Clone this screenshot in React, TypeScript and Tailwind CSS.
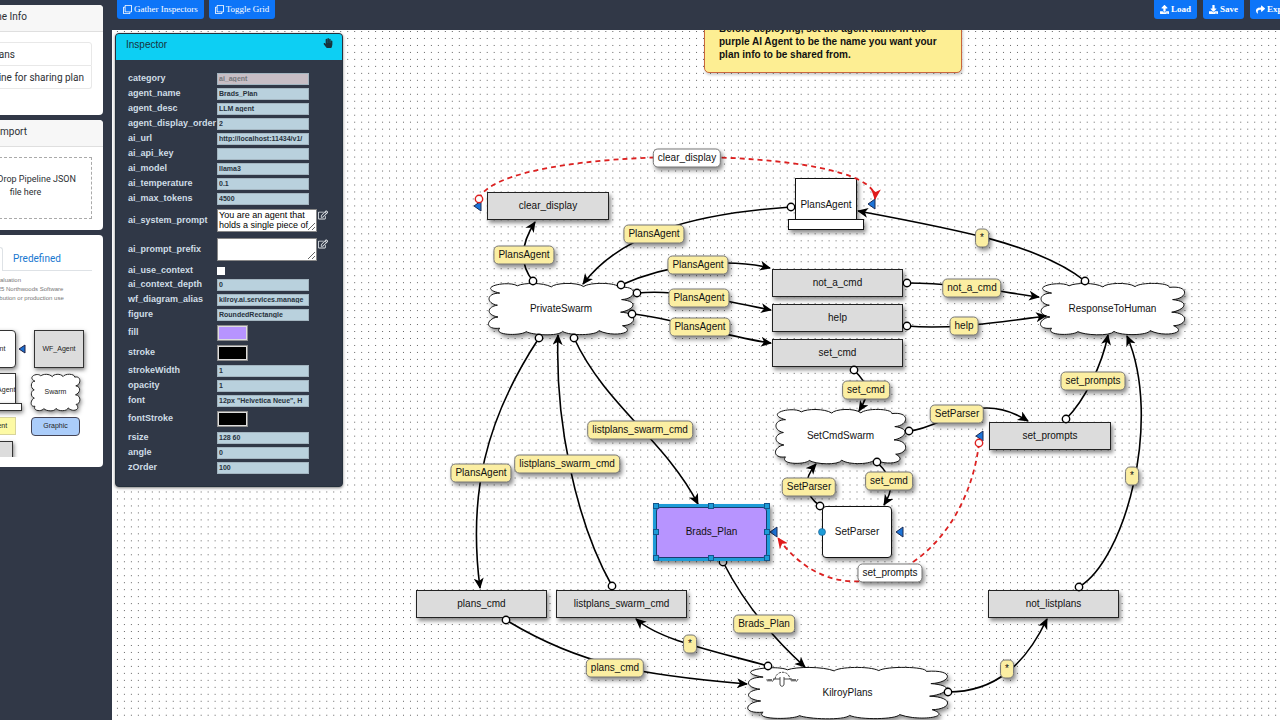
import {
  FaDownload,
  FaHandPaper,
  FaRegClone,
  FaRegEdit,
  FaShare,
  FaUpload,
} from "react-icons/fa";

type Box = {
  x: number;
  y: number;
  w: number;
  h: number;
};

type NodeProps = Box & {
  text: string;
};

type LabelProps = {
  x: number;
  y: number;
  text: string;
  white?: boolean;
};

type Link = {
  from: [number, number];
  path: string;
  dashed?: boolean;
};

type Field = {
  name: string;
  kind?: "textarea" | "color" | "checkbox" | "disabled";
  value?: string;
  row?: string;
};

const fields: Field[] = [
  { name: "category", value: "ai_agent", kind: "disabled" },
  { name: "agent_name", value: "Brads_Plan" },
  { name: "agent_desc", value: "LLM agent" },
  { name: "agent_display_order", value: "2" },
  { name: "ai_url", value: "http://localhost:11434/v1/" },
  { name: "ai_api_key", value: "" },
  { name: "ai_model", value: "llama3" },
  { name: "ai_temperature", value: "0.1" },
  { name: "ai_max_tokens", value: "4500" },
  {
    name: "ai_system_prompt",
    value: "You are an agent that holds a single piece of",
    kind: "textarea",
    row: "h-[29px]",
  },
  { name: "ai_prompt_prefix", value: "", kind: "textarea", row: "h-[29px]" },
  { name: "ai_use_context", kind: "checkbox", row: "h-[13px]" },
  { name: "ai_context_depth", value: "0" },
  { name: "wf_diagram_alias", value: "kilroy.ai.services.manage" },
  { name: "figure", value: "RoundedRectangle" },
  { name: "fill", value: "#b794ff", kind: "color", row: "h-[21px]" },
  { name: "stroke", value: "#000000", kind: "color", row: "h-[20px]" },
  { name: "strokeWidth", value: "1" },
  { name: "opacity", value: "1" },
  { name: "font", value: '12px "Helvetica Neue", H' },
  { name: "fontStroke", value: "#000000", kind: "color", row: "h-[22px]" },
  { name: "rsize", value: "128 60" },
  { name: "angle", value: "0" },
  { name: "zOrder", value: "100" },
];

const commands: NodeProps[] = [
  { text: "clear_display", x: 487, y: 192, w: 122, h: 28 },
  { text: "not_a_cmd", x: 772, y: 269, w: 131, h: 28 },
  { text: "help", x: 772, y: 304, w: 131, h: 28 },
  { text: "set_cmd", x: 772, y: 339, w: 131, h: 28 },
  { text: "set_prompts", x: 989, y: 422, w: 122, h: 28 },
  { text: "plans_cmd", x: 416, y: 590, w: 131, h: 28 },
  { text: "listplans_swarm_cmd", x: 556, y: 590, w: 131, h: 28 },
  { text: "not_listplans", x: 988, y: 590, w: 131, h: 28 },
];

const swarms: NodeProps[] = [
  { text: "PrivateSwarm", x: 488, y: 283, w: 146, h: 52 },
  { text: "ResponseToHuman", x: 1040, y: 283, w: 145, h: 52 },
  { text: "SetCmdSwarm", x: 775, y: 409, w: 131, h: 55 },
  { text: "KilroyPlans", x: 747, y: 667, w: 201, h: 52 },
];

const links: Link[] = [
  { from: [533, 281], path: "C520 265 520 245 535 222" },
  { from: [791, 207], path: "C690 214 620 235 583 284" },
  { from: [621, 285], path: "C665 265 725 257 770 268" },
  { from: [637, 293], path: "C680 289 725 301 771 310" },
  { from: [632, 314], path: "C670 317 725 337 771 343" },
  { from: [1085, 281], path: "C1040 245 960 230 858 211" },
  { from: [907, 283], path: "C955 283 995 291 1039 297" },
  { from: [907, 326], path: "C950 330 1000 322 1046 316" },
  { from: [854, 370], path: "C869 385 871 392 859 411" },
  { from: [909, 431], path: "C945 428 975 388 1028 421" },
  { from: [877, 462], path: "C895 480 893 490 884 505" },
  { from: [820, 506], path: "C805 495 802 480 816 464" },
  { from: [574, 338], path: "C605 405 665 440 698 504" },
  { from: [539, 338], path: "C485 420 468 495 480 588" },
  { from: [612, 586], path: "C575 520 555 420 558 335" },
  { from: [506, 620], path: "C580 665 640 675 747 684" },
  { from: [768, 666], path: "C710 650 660 640 636 619" },
  { from: [723, 562], path: "C745 605 775 640 805 667" },
  { from: [948, 692], path: "C995 692 1025 665 1047 619" },
  { from: [1079, 587], path: "C1125 560 1163 420 1127 336" },
  { from: [1066, 419], path: "C1085 400 1102 365 1108 335" },
  { from: [479, 199], path: "C500 143 880 143 875 199", dashed: true },
  { from: [979, 443], path: "C965 565 845 630 778 538", dashed: true },
];

const labels: LabelProps[] = [
  { text: "clear_display", x: 687, y: 158, white: true },
  { text: "PlansAgent", x: 524, y: 255 },
  { text: "PlansAgent", x: 654, y: 234 },
  { text: "PlansAgent", x: 698, y: 265 },
  { text: "PlansAgent", x: 699, y: 298 },
  { text: "PlansAgent", x: 700, y: 327 },
  { text: "PlansAgent", x: 481, y: 473 },
  { text: "listplans_swarm_cmd", x: 640, y: 430 },
  { text: "listplans_swarm_cmd", x: 567, y: 464 },
  { text: "set_cmd", x: 866, y: 390 },
  { text: "set_cmd", x: 889, y: 481 },
  { text: "SetParser", x: 957, y: 414 },
  { text: "SetParser", x: 809, y: 487 },
  { text: "not_a_cmd", x: 972, y: 288 },
  { text: "help", x: 964, y: 326 },
  { text: "set_prompts", x: 1093, y: 381 },
  { text: "set_prompts", x: 890, y: 573, white: true },
  { text: "Brads_Plan", x: 764, y: 624 },
  { text: "plans_cmd", x: 615, y: 668 },
  { text: "*", x: 982, y: 238 },
  { text: "*", x: 1132, y: 476 },
  { text: "*", x: 690, y: 644 },
  { text: "*", x: 1007, y: 669 },
];

const ports = [
  [474, 206],
  [868, 204],
  [770, 532],
  [896, 532],
  [976, 436],
];

const handles = [
  [656, 506],
  [711, 506],
  [767, 506],
  [656, 532],
  [767, 532],
  [656, 558],
  [711, 558],
  [767, 558],
];

// Bezier segments of the cloud outline on a unit square: c1, c2, end
const cloud = [
  [-0.0924, 0.0784, 0.1406, -0.0543, 0.2009, 0.0535],
  [0.2451, -0.007, 0.3776, -0.0111, 0.4339, 0.0742],
  [0.4539, 0, 0.6066, -0.0253, 0.6558, 0.07],
  [0.6914, -0.019, 0.8921, -0.0122, 0.8921, 0.0837],
  [1.0364, 0.0411, 1.0204, 0.3022, 0.9148, 0.3195],
  [1.0445, 0.3602, 0.9923, 0.5219, 0.9083, 0.562],
  [1.0323, 0.5772, 1.0184, 0.8121, 0.9212, 0.8217],
  [1.0284, 0.9571, 0.8557, 1.0525, 0.7593, 0.9157],
  [0.7432, 1.0093, 0.5624, 1.0218, 0.5102, 0.931],
  [0.4821, 1.0318, 0.303, 1.0028, 0.2609, 0.9345],
  [0.233, 1.0152, 0.0321, 1.0152, 0.0803, 0.8701],
  [-0.0281, 0.9033, -0.0121, 0.6836, 0.0683, 0.6545],
  [-0.0181, 0.609, -0.0061, 0.4556, 0.0643, 0.4266],
  [-0.0161, 0.3893, -0.0121, 0.1944, 0.0803, 0.1944],
];

const cloudPath = ({ x, y, w, h }: Box) => {
  const scale = (value: number, i: number) =>
    (i % 2 === 0 ? x + value * w : y + value * h).toFixed(1);
  const start = [0.0803, 0.1944].map(scale).join(" ");
  return `M${start} ${cloud
    .map((segment) => `C${segment.map(scale).join(" ")}`)
    .join(" ")}Z`;
};

const ToolButton = ({
  icon,
  text,
  bold,
}: {
  icon: React.ReactNode;
  text: string;
  bold?: boolean;
}) => (
  <button
    type="button"
    className={`flex h-[19px] shrink-0 items-center gap-[2px] rounded-b-[3px] bg-[#0d75f8] px-[6px] font-['Liberation_Serif',serif] text-[9px] text-white ${
      bold ? "font-bold" : ""
    }`}
  >
    {icon}
    {text}
  </button>
);

const Toolbar = () => (
  <header className="flex h-[30px] shrink-0 items-start justify-between pl-[5px]">
    <div className="flex gap-[5px]">
      <ToolButton icon={<FaRegClone size={9} />} text="Gather Inspectors" />
      <ToolButton icon={<FaRegClone size={9} />} text="Toggle Grid" />
    </div>
    <div className="-mr-5 flex gap-[6px]">
      <ToolButton bold icon={<FaUpload size={9} />} text="Load" />
      <ToolButton bold icon={<FaDownload size={9} />} text="Save" />
      <ToolButton bold icon={<FaShare size={9} />} text="Export" />
    </div>
  </header>
);

const Card = ({
  title,
  children,
}: {
  title?: string;
  children: React.ReactNode;
}) => (
  <section className="overflow-hidden rounded-[4px] bg-white">
    {title && (
      <h2 className="h-[27px] border-b border-[#dfdfdf] bg-[#f7f7f7] pt-1 pr-[76px] text-right leading-4 whitespace-nowrap">
        {title}
      </h2>
    )}
    {children}
  </section>
);

const PaletteNode = ({
  className,
  text,
}: {
  className: string;
  text: string;
}) => (
  <div
    className={`absolute flex items-center justify-center border ${className}`}
  >
    {text}
  </div>
);

const Palette = () => (
  <div className="relative h-[186px] overflow-hidden font-['Liberation_Sans',sans-serif]">
    <p className="pt-[5px] pl-[19px] text-[6px] leading-[9px] whitespace-nowrap text-[#777]">
      GoJS 2.3 evaluation
      <br />
      (c) 1998-2025 Northwoods Software
      <br />
      Not for distribution or production use
    </p>
    <div className="text-[7px] text-[#222]">
      <PaletteNode
        className="top-[59px] left-[18px] h-[38px] w-[50px] rounded-[4px] border-[#333] bg-white shadow-[1px_2px_4px_rgba(0,0,0,0.5)]"
        text="AI_Agent"
      />
      <PaletteNode
        className="top-[59px] left-[86px] h-[38px] w-[50px] border-[#333] bg-[#dcdcdc] shadow-[1px_2px_4px_rgba(0,0,0,0.5)]"
        text="WF_Agent"
      />
      <PaletteNode
        className="top-[102px] left-[22px] h-[31px] w-[46px] border-[#333] bg-white pt-1 shadow-[1px_2px_4px_rgba(0,0,0,0.5)]"
        text="Human_Agent"
      />
      <PaletteNode
        className="top-[132px] left-[18px] h-[8px] w-[56px] border-[#333] bg-white shadow-[1px_2px_4px_rgba(0,0,0,0.5)]"
        text=""
      />
      <PaletteNode
        className="top-[146px] left-[20px] h-[18px] w-[48px] border-[#d8d49a] bg-[#fdfaa5]"
        text="Comment"
      />
      <PaletteNode
        className="top-[146px] left-[83px] h-[19px] w-[49px] rounded-[4px] border-[#444455] bg-[#abcdfa]"
        text="Graphic"
      />
      <PaletteNode
        className="top-[170px] left-[20px] h-[24px] w-[45px] border-[#333] bg-[#dcdcdc] shadow-[1px_2px_4px_rgba(0,0,0,0.5)]"
        text=""
      />
      <svg
        className="absolute top-0 left-0 h-full w-full"
        fill="white"
        stroke="#222"
      >
        <path
          d={cloudPath({ x: 83, y: 103, w: 49, h: 37 })}
          className="drop-shadow-[1px_2px_2px_rgba(0,0,0,0.5)]"
        />
        <path d="M71 78L77 74V82Z" fill="#1c6fd0" stroke="#224" />
      </svg>
      <span className="absolute top-[116px] left-[83px] w-[49px] text-center">
        Swarm
      </span>
    </div>
  </div>
);

const Sidebar = () => (
  <aside className="flex w-28 shrink-0 justify-end overflow-hidden pt-[5px] pr-[9px] font-[Roboto,sans-serif] text-[10px] text-[#2b2f33]">
    <div className="flex w-[155px] shrink-0 flex-col gap-[5px]">
      <Card title="Pipeline Info">
        <div className="flex h-[83px] flex-col px-[11px] pt-[10px]">
          <input
            aria-label="Pipeline name"
            className="h-[24px] rounded-t-[3px] border border-[#e8e8e8] pr-[76px] text-right outline-none"
            defaultValue="Kilroy Plans"
          />
          <input
            aria-label="Pipeline description"
            className="h-[23px] rounded-b-[3px] border border-t-0 border-[#e8e8e8] pr-[7px] text-right outline-none"
            defaultValue="Pipeline for sharing plan"
          />
        </div>
      </Card>
      <Card title="Pipeline Import">
        <div className="h-[83px] px-[11px] pt-[10px]">
          <div className="flex h-[62px] items-center justify-center border border-dashed border-[#aaa] pb-1 text-center text-[9px] leading-[13px] whitespace-nowrap">
            Drag/Drop Pipeline JSON
            <br />
            file here
          </div>
        </div>
      </Card>
      <Card>
        <div className="flex h-[36px] items-end px-[11px]">
          <button
            type="button"
            className="h-[24px] w-[44px] rounded-t-[3px] border border-b-0 border-[#dee2e6]"
          >
            Basic
          </button>
          <button
            type="button"
            className="h-[24px] flex-1 border-b border-[#dee2e6] pl-[10px] text-left text-[#1878d0]"
          >
            Predefined
          </button>
        </div>
        <Palette />
        <div className="h-[10px]" />
      </Card>
    </div>
  </aside>
);

const FieldInput = ({ name, kind, value }: Field) => {
  if (kind === "textarea") {
    return (
      <>
        <textarea
          id={name}
          className="block h-[23px] w-[100px] overflow-hidden border border-[#888] bg-white px-px text-[9px] leading-[10px] text-black outline-none"
          defaultValue={value}
        />
        <button
          type="button"
          aria-label={`Edit ${name}`}
          className="mb-3 ml-px text-[#e4e8ec]"
        >
          <FaRegEdit size={10} />
        </button>
      </>
    );
  }
  if (kind === "checkbox") {
    return (
      <input
        id={name}
        type="checkbox"
        className="size-2 appearance-none bg-white"
      />
    );
  }
  if (kind === "color") {
    return (
      <input
        id={name}
        type="color"
        defaultValue={value}
        className="h-4 w-[31px] border border-[#8d8d8d] bg-[#ddd] p-px [&::-webkit-color-swatch]:rounded-none [&::-webkit-color-swatch]:border-0 [&::-webkit-color-swatch-wrapper]:p-0"
      />
    );
  }
  return (
    <input
      id={name}
      disabled={kind === "disabled"}
      defaultValue={value}
      className="h-[12px] w-[92px] border border-[#a3b5c0] bg-[#b9d1dd] px-px text-[7px] font-bold text-[#28323c] outline-none disabled:bg-[#c7bec5] disabled:text-[#74777c]"
    />
  );
};

const Inspector = () => (
  <section className="absolute top-[3px] left-[3px] w-[228px] overflow-hidden rounded-[4px] border border-[#25303c] bg-[#303847] font-['Liberation_Sans',sans-serif] shadow-[0_1px_3px_rgba(0,0,0,0.5)]">
    <div className="flex h-[26px] justify-between bg-[#0dcff3] px-[9px] pt-1 text-[#17333d]">
      <h2 className="pl-px text-[10px] leading-[13px]">Inspector</h2>
      <FaHandPaper size={10} />
    </div>
    <div className="pt-[11px] pb-[11px] pl-3">
      {fields.map((field) => (
        <div
          key={field.name}
          className={`flex items-center ${field.row ?? "h-[15px]"}`}
        >
          <label
            htmlFor={field.name}
            className="w-[89px] shrink-0 text-[9px] font-bold whitespace-nowrap text-[#cfdde6]"
          >
            {field.name}
          </label>
          <FieldInput {...field} />
        </div>
      ))}
    </div>
  </section>
);

const CommandNode = ({ text, x, y, w, h }: NodeProps) => (
  <div
    className="absolute flex items-center justify-center border border-[#222] bg-[#dcdcdc] pb-[2px] shadow-[2px_3px_4px_rgba(0,0,0,0.45)]"
    style={{ left: x, top: y, width: w, height: h }}
  >
    {text}
  </div>
);

const LinkLabel = ({ text, x, y, white }: LabelProps) => (
  <div
    className={`absolute flex h-[19px] -translate-x-1/2 -translate-y-1/2 items-center rounded-[5px] border border-[#777] px-1 pb-[2px] whitespace-nowrap shadow-[2px_3px_4px_rgba(0,0,0,0.45)] ${
      white ? "bg-white" : "bg-[#fbeea2]"
    }`}
    style={{ left: x, top: y }}
  >
    {text}
  </div>
);

const Grid = () => (
  <svg className="absolute h-full w-full">
    <pattern
      id="dots"
      x="403"
      y="31"
      width="6.977"
      height="6.977"
      patternUnits="userSpaceOnUse"
    >
      <rect width="1" height="1" fill="#666" />
    </pattern>
    <rect width="100%" height="100%" fill="url(#dots)" />
  </svg>
);

const Links = () => (
  <svg className="absolute h-full w-full" fill="none">
    <defs>
      <marker
        id="arrow"
        markerUnits="userSpaceOnUse"
        markerWidth="12"
        markerHeight="12"
        refX="10"
        refY="5"
        orient="auto"
      >
        <path d="M0 0L11 5L0 10L3 5Z" fill="#000" />
      </marker>
      <marker
        id="redArrow"
        markerUnits="userSpaceOnUse"
        markerWidth="12"
        markerHeight="12"
        refX="10"
        refY="5"
        orient="auto"
      >
        <path d="M0 0L11 5L0 10L3 5Z" fill="#e01b1b" />
      </marker>
    </defs>
    {swarms.map((swarm) => (
      <path
        key={swarm.text}
        d={cloudPath(swarm)}
        fill="white"
        stroke="#111"
        className="drop-shadow-[2px_3px_2px_rgba(0,0,0,0.45)]"
      />
    ))}
    {ports.map(([x, y]) => (
      <path
        key={`${x}-${y}`}
        d={`M${x} ${y}l7 -5v10Z`}
        fill="#1c74d8"
        stroke="#1d2c55"
      />
    ))}
    {links.map(({ from: [x, y], path, dashed }) => (
      <g key={path} stroke={dashed ? "#dc2020" : "#000"}>
        <path
          d={`M${x} ${y}${path}`}
          strokeWidth={dashed ? 1.8 : 1.6}
          strokeDasharray={dashed ? "5 4" : undefined}
          markerEnd={dashed ? "url(#redArrow)" : "url(#arrow)"}
        />
        <circle cx={x} cy={y} r="3.7" fill="white" strokeWidth="1.4" />
      </g>
    ))}
    <g stroke="#333" strokeWidth="0.9">
      <path d="M775 679C776 670 789 670 790 679" strokeDasharray="2.5 1" />
      <path d="M773 679H780M784 679H792" />
      <path d="M780 677V684C780 687 784 687 784 684V677" />
      <path d="M767 679C767 682 769 682 769 679C769 682 771 682 771 679C771 682 773 682 774 679" />
      <path d="M791 679C791 682 793 682 793 679C793 682 795 682 795 679C795 682 797 682 798 679" />
    </g>
  </svg>
);

const SelectedNode = () => (
  <>
    <div className="absolute top-[504px] left-[653px] flex h-[57px] w-[117px] items-center justify-center border-3 border-[#1e9cd7] bg-[#1e9cd7] shadow-[2px_3px_4px_rgba(0,0,0,0.45)]">
      <div className="flex h-full w-full items-center justify-center rounded-[4px] border border-[#1c3a70] bg-[#b794ff] pb-[2px]">
        Brads_Plan
      </div>
    </div>
    <svg className="absolute h-full w-full" fill="#1e9cd7" stroke="#14568c">
      {handles.map(([x, y]) => (
        <rect key={`${x}-${y}`} x={x - 2.5} y={y - 2.5} width="5" height="5" />
      ))}
      <circle cx="822" cy="532" r="3.5" strokeWidth="0.6" />
    </svg>
  </>
);

const Diagram = () => (
  <div className="absolute -top-[30px] -left-28 h-[1000px] w-[2000px] font-['Liberation_Sans',sans-serif] text-[10px] text-[#111]">
    <Grid />
    <div className="absolute top-0 left-[704px] flex h-[73px] w-[258px] items-end rounded-[5px] border border-[#c8673c] bg-[#fdee93] pb-[11px] pl-[14px] leading-[13px] font-bold shadow-[1px_2px_3px_rgba(0,0,0,0.2)]">
      Before deploying, set the agent name in the
      <br />
      purple AI Agent to be the name you want your
      <br />
      plan info to be shared from.
    </div>
    {commands.map((node) => (
      <CommandNode key={node.text} {...node} />
    ))}
    <div className="absolute top-[178px] left-[795px] flex h-[42px] w-[62px] items-center justify-center border border-[#111] bg-white pt-[10px] shadow-[2px_3px_4px_rgba(0,0,0,0.45)]">
      PlansAgent
    </div>
    <div className="absolute top-[219px] left-[788px] h-[11px] w-[76px] border border-[#111] bg-white shadow-[2px_3px_4px_rgba(0,0,0,0.45)]" />
    <div className="absolute top-[506px] left-[822px] flex h-[52px] w-[70px] items-center justify-center rounded-[4px] border border-[#111] bg-white pb-[2px] shadow-[2px_3px_4px_rgba(0,0,0,0.45)]">
      SetParser
    </div>
    <Links />
    {swarms.map(({ text, x, y, w, h }) => (
      <div
        key={text}
        className="absolute flex items-center justify-center pb-[2px]"
        style={{ left: x, top: y, width: w, height: h }}
      >
        {text}
      </div>
    ))}
    {labels.map((label) => (
      <LinkLabel key={`${label.x}-${label.y}`} {...label} />
    ))}
    <SelectedNode />
  </div>
);

export default function App() {
  return (
    <div className="flex h-screen overflow-hidden bg-[#313847]">
      <Sidebar />
      <main className="flex min-w-0 flex-1 flex-col">
        <Toolbar />
        <div className="relative flex-1 overflow-hidden bg-white">
          <Diagram />
          <Inspector />
        </div>
      </main>
    </div>
  );
}
